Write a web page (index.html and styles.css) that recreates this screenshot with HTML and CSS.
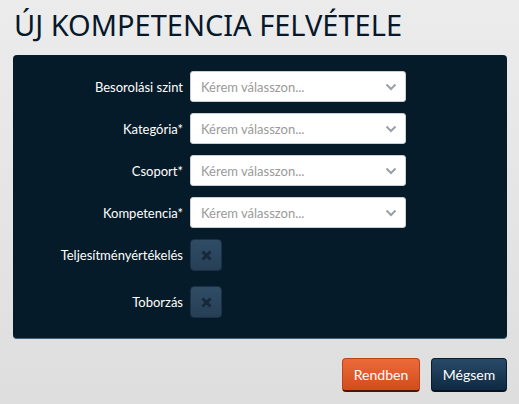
FILE: index.html
```html
<!DOCTYPE html>
<html lang="hu">
<head>
    <meta charset="UTF-8">
    <title>Új kompetencia felvétele</title>
    <link rel="stylesheet" href="styles.css">
</head>
<body>
    <h1 class="page-title">ÚJ KOMPETENCIA FELVÉTELE</h1>

    <div class="form-panel">
        <div class="form-row">
            <label class="form-label">Besorolási szint</label>
            <div class="select-box">
                <span>Kérem válasszon...</span>
                <svg class="chevron" width="12" height="8" viewBox="0 0 12 8"><path d="M1.5 1.5 L6 6 L10.5 1.5" fill="none" stroke="#9aa0a6" stroke-width="2"/></svg>
            </div>
        </div>
        <div class="form-row">
            <label class="form-label">Kategória*</label>
            <div class="select-box">
                <span>Kérem válasszon...</span>
                <svg class="chevron" width="12" height="8" viewBox="0 0 12 8"><path d="M1.5 1.5 L6 6 L10.5 1.5" fill="none" stroke="#9aa0a6" stroke-width="2"/></svg>
            </div>
        </div>
        <div class="form-row">
            <label class="form-label">Csoport*</label>
            <div class="select-box">
                <span>Kérem válasszon...</span>
                <svg class="chevron" width="12" height="8" viewBox="0 0 12 8"><path d="M1.5 1.5 L6 6 L10.5 1.5" fill="none" stroke="#9aa0a6" stroke-width="2"/></svg>
            </div>
        </div>
        <div class="form-row">
            <label class="form-label">Kompetencia*</label>
            <div class="select-box">
                <span>Kérem válasszon...</span>
                <svg class="chevron" width="12" height="8" viewBox="0 0 12 8"><path d="M1.5 1.5 L6 6 L10.5 1.5" fill="none" stroke="#9aa0a6" stroke-width="2"/></svg>
            </div>
        </div>
        <div class="form-row check-row">
            <label class="form-label">Teljesítményértékelés</label>
            <div class="toggle-box">
                <svg width="11" height="11" viewBox="0 0 11 11"><path d="M1.5 1.5 L9.5 9.5 M9.5 1.5 L1.5 9.5" stroke="#15293b" stroke-width="3"/></svg>
            </div>
        </div>
        <div class="form-row check-row">
            <label class="form-label">Toborzás</label>
            <div class="toggle-box">
                <svg width="11" height="11" viewBox="0 0 11 11"><path d="M1.5 1.5 L9.5 9.5 M9.5 1.5 L1.5 9.5" stroke="#15293b" stroke-width="3"/></svg>
            </div>
        </div>
    </div>

    <div class="actions">
        <button class="btn btn-ok">Rendben</button>
        <button class="btn btn-cancel">Mégsem</button>
    </div>
</body>
</html>
```

FILE: styles.css
```css
/* Reset */
* {
    margin: 0;
    padding: 0;
    box-sizing: border-box;
}

body {
    font-family: 'Lato', 'Open Sans', sans-serif;
    background: linear-gradient(180deg, #ececec, #dedede);
    min-height: 100vh;
    padding: 6px 12px 0 13px;
    color: #fff;
}

/* Title */
.page-title {
    font-family: 'Noto Sans', 'Open Sans', sans-serif;
    font-size: 29px;
    font-weight: 400;
    color: #06182a;
    line-height: 38px;
    height: 49px;
    padding-left: 1px;
}

/* Panel */
.form-panel {
    background: #061b29;
    border-radius: 4px;
    border-bottom: 1px solid #3d5f7a;
    padding: 16px 0 20px 0;
    width: 494px;
    height: 284px;
}

.form-row {
    display: flex;
    align-items: center;
    height: 31px;
    margin-bottom: 11px;
}

.form-label {
    width: 177px;
    text-align: right;
    padding-right: 7px;
    font-size: 13px;
    color: #fff;
}

.select-box {
    width: 216px;
    height: 31px;
    background: #fff;
    border: 1px solid #c9ced3;
    border-radius: 3px;
    display: flex;
    align-items: center;
    justify-content: space-between;
    padding: 0 8px 0 10px;
    font-size: 13px;
    color: #9a9a9a;
}

.check-row {
    height: 32px;
    margin-bottom: 15px;
}

.toggle-box {
    width: 32px;
    height: 32px;
    border-radius: 4px;
    background: linear-gradient(180deg, #304c66, #273f56);
    border: 1px solid #1a3145;
    display: flex;
    align-items: center;
    justify-content: center;
}

/* Buttons */
.actions {
    display: flex;
    justify-content: flex-end;
    gap: 11px;
    margin-top: 19px;
    width: 494px;
}

.btn {
    height: 34px;
    border-radius: 4px;
    font-family: 'Lato', 'Open Sans', sans-serif;
    font-size: 14px;
    color: #fff;
    cursor: pointer;
}

.btn-ok {
    width: 78px;
    background: linear-gradient(180deg, #ec6a3a, #d24c1c);
    border: 1px solid #b9441a;
    border-bottom: 2px solid #4a1606;
}

.btn-cancel {
    width: 76px;
    background: linear-gradient(180deg, #284a68, #0f2a42);
    border: 1px solid #0a1d2d;
    border-bottom: 2px solid #07141f;
}
```
